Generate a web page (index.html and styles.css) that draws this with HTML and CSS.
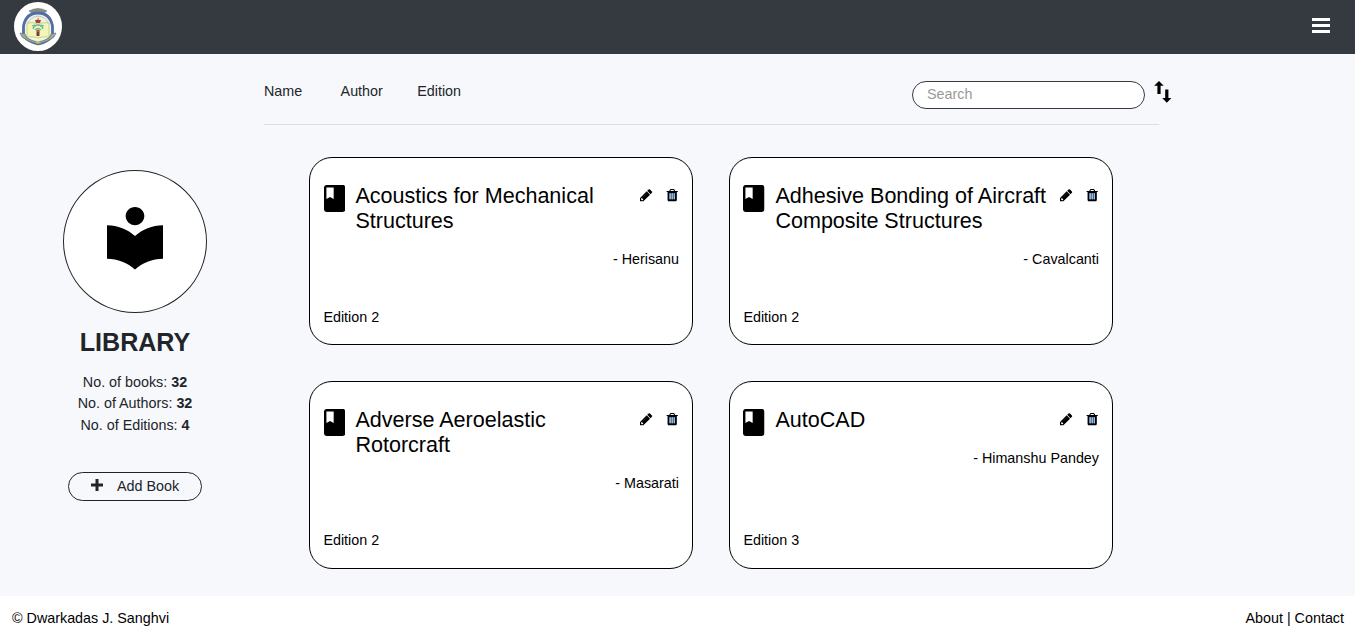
FILE: index.html
```html
<!DOCTYPE html>
<html lang="en">
<head>
<meta charset="utf-8">
<title>Library</title>
<link rel="stylesheet" href="styles.css">
</head>
<body>
<svg class="sprite" aria-hidden="true">
  <symbol id="book" viewBox="4 2 16 20" preserveAspectRatio="none"><path d="M18 2H6c-1.100 0-2 .9-2 2v16c0 1.100.9 2 2 2h12c1.100 0 2-.9 2-2V4c0-1.100-.9-2-2-2zM5.800 3.900h5.400v8.400l-2.700-1.500-2.700 1.500V3.900z"/></symbol>
  <symbol id="pencil" viewBox="0 0 1792 1792"><path d="M450 1536l91-91-194-194-91 91v107h87v87h107zM960 416l416 416-832 832h-416v-416zm683 96q0 53-37 90l-166 166-416-416 166-165q36-38 90-38 53 0 91 38l235 234q37 39 37 91z"/><path d="M990 640l-540 540" stroke="#555" stroke-width="45"/></symbol>
  <symbol id="trash" viewBox="0 0 1792 1792"><path d="M704 1376v-704q0-14-9-23t-23-9h-64q-14 0-23 9t-9 23v704q0 14 9 23t23 9h64q14 0 23-9t9-23zm256 0v-704q0-14-9-23t-23-9h-64q-14 0-23 9t-9 23v704q0 14 9 23t23 9h64q14 0 23-9t9-23zm256 0v-704q0-14-9-23t-23-9h-64q-14 0-23 9t-9 23v704q0 14 9 23t23 9h64q14 0 23-9t9-23zm-544-992h448l-48-117q-7-9-17-11h-317q-10 2-17 11zm928 32v64q0 14-9 23t-23 9h-96v948q0 83-47 143.500t-113 60.500h-832q-66 0-113-58.500t-47-141.500v-952h-96q-14 0-23-9t-9-23v-64q0-14 9-23t23-9h309l70-167q15-37 54-63t79-26h320q40 0 79 26t54 63l70 167h309q14 0 23 9t9 23z"/><path d="M640 640v760M896 640v760M1152 640v760" stroke="#7cb8ff" stroke-width="145"/></symbol>
</svg>

<header class="navbar">
  <a class="brand" aria-label="Home">
    <svg viewBox="0 0 48 48">
      <path d="M15 9q9-5 18 0l-3 2q-6-3-12 0z" fill="#7f8f83" stroke="#65766c" stroke-width=".6"/>
      <path d="M9.500 34V24Q12 11 24 11t14.500 13v10q-5 6-14.500 8-9-2-14.500-8z" fill="#f1f3e4" stroke="#526da8" stroke-width="2.800"/>
      <path d="M14 33V21q2-6 10-7 8 1 10 7v12" fill="#eef2df" stroke="#a5b4cf" stroke-width=".7"/>
      <path d="M13 21q6-1 11 1 5-2 11-1v14q-6-1-11 1-5-2-11-1z" fill="#f4f5b9" stroke="#bdcc72" stroke-width=".8"/>
      <path d="M19 27q1-4 5-4t5 4M21 28q3-3 6 0M18 24l3-1M27 23l3 1" fill="none" stroke="#68b99a" stroke-width="1.300"/>
      <path d="M21 18h6l-1 3h-4z" fill="#a93e38"/><path d="M24 15l1.500 3h-3z" fill="#e7a34a"/>
      <path d="M22.500 28h3v6h-3z" fill="#793c34"/><path d="M24 27v3" stroke="#e28b47"/>
      <path d="M6 31l5 1 2 4q5 3 11 4 6-1 11-4l2-4 5-1-2 4q-6 5-16 7-10-2-16-7z" fill="#9ba7a4" stroke="#65756f" stroke-width=".7"/>
      <path d="M21 40l3-1 3 1-3 2z" fill="#b7cf5a"/>
    </svg>
  </a>
  <svg class="menu" viewBox="0 0 18 15"><path d="M0 0h18v3H0zM0 6h18v3H0zM0 12h18v3H0z"/></svg>
</header>

<main class="page">
  <aside class="profile">
    <div class="avatar"><svg viewBox="3 2 18 20.550" preserveAspectRatio="none"><path d="M12 11.550C9.640 9.350 6.480 8 3 8v11c3.480 0 6.640 1.350 9 3.550 2.360-2.190 5.520-3.550 9-3.550V8c-3.480 0-6.640 1.350-9 3.550zM12 8c1.660 0 3-1.340 3-3s-1.340-3-3-3-3 1.340-3 3 1.340 3 3 3z"/></svg></div>
    <h1 class="heading">LIBRARY</h1>
    <p class="stats">No. of books: <b>32</b><br>No. of Authors: <b>32</b><br>No. of Editions: <b>4</b></p>
    <button class="add"><svg viewBox="0 0 12 12"><path d="M4.500 0h3v4.500H12v3H7.500V12h-3V7.500H0v-3h4.500z"/></svg><span>Add Book</span></button>
  </aside>

  <section class="content">
    <div class="toolbar">
      <nav class="filters"><a>Name</a><a>Author</a><a>Edition</a></nav>
      <input class="search" type="text" placeholder="Search">
      <svg class="sort" viewBox="0 0 17 22"><path d="M5 0l4.700 4.800H6.600V13H3.400V4.800H.2zM11.200 8.500h3.200V17h3l-4.600 4.700L8.200 17h3z"/></svg>
    </div>
    <div class="cards">
      <article class="card">
        <div class="card-top"><svg class="book"><use href="#book"/></svg><h2 class="title">Acoustics for Mechanical Structures</h2><div class="actions"><svg><use href="#pencil"/></svg><svg><use href="#trash"/></svg></div></div>
        <p class="author">- Herisanu</p><p class="edition">Edition 2</p>
      </article>
      <article class="card">
        <div class="card-top"><svg class="book"><use href="#book"/></svg><h2 class="title">Adhesive Bonding of Aircraft Composite Structures</h2><div class="actions"><svg><use href="#pencil"/></svg><svg><use href="#trash"/></svg></div></div>
        <p class="author">- Cavalcanti</p><p class="edition">Edition 2</p>
      </article>
      <article class="card">
        <div class="card-top"><svg class="book"><use href="#book"/></svg><h2 class="title">Adverse Aeroelastic Rotorcraft</h2><div class="actions"><svg><use href="#pencil"/></svg><svg><use href="#trash"/></svg></div></div>
        <p class="author">- Masarati</p><p class="edition">Edition 2</p>
      </article>
      <article class="card">
        <div class="card-top"><svg class="book"><use href="#book"/></svg><h2 class="title">AutoCAD</h2><div class="actions"><svg><use href="#pencil"/></svg><svg><use href="#trash"/></svg></div></div>
        <p class="author">- Himanshu Pandey</p><p class="edition">Edition 3</p>
      </article>
    </div>
  </section>
</main>

<footer class="footer"><span>© Dwarkadas J. Sanghvi</span><span>About | Contact</span></footer>
</body>
</html>
```

FILE: styles.css
```css
* { box-sizing: border-box; }
body {
  margin: 0;
  height: 641px;
  overflow: hidden;
  display: flex;
  flex-direction: column;
  font: 14.33px/21.6px "Liberation Sans", Arial, sans-serif;
  color: #212529;
  background: #fff;
}
h1, h2, p { margin: 0; }
svg { display: block; flex: none; }
.sprite { display: none; }

.navbar {
  height: 54px;
  flex: none;
  display: flex;
  justify-content: space-between;
  align-items: flex-start;
  padding: 2px 25px 0 14px;
  background: #343a40;
}
.brand {
  width: 48px;
  height: 49px;
  border-radius: 50%;
  background: #fff;
}
.brand svg { width: 48px; height: 48px; }
.menu { width: 18px; height: 15px; margin-top: 16px; fill: #fff; }

.page {
  height: 542px;
  flex: none;
  display: flex;
  background: #f7f8fc;
}
.profile {
  width: 270px;
  padding-top: 116px;
  display: flex;
  flex-direction: column;
  align-items: center;
}
.avatar {
  width: 144px;
  height: 143px;
  padding-top: 36px;
  display: flex;
  justify-content: center;
  align-items: flex-start;
  border: 1px solid #212529;
  border-radius: 50%;
  background: #fff;
}
.avatar svg { width: 56px; height: 62.5px; }
.heading { margin-top: 14px; font-size: 25.1px; line-height: 30px; }
.stats { margin-top: 14.5px; text-align: center; }
.add {
  width: 134px;
  height: 29px;
  margin-top: 35.5px;
  padding: 1px 0 0 22px;
  display: flex;
  align-items: center;
  gap: 14px;
  font: inherit;
  color: inherit;
  background: transparent;
  border: 1px solid #212529;
  border-radius: 15px;
}
.add svg { width: 12px; height: 12px; margin-top: -3px; fill: #212529; }

.content { width: 902px; margin-left: -6px; }
.toolbar {
  width: 895px;
  height: 71px;
  padding-top: 27px;
  display: flex;
  align-items: flex-start;
  border-bottom: 1px solid #dddee2;
}
.filters { width: 648px; flex: none; display: flex; }
.filters a { width: 76.6px; }
.search {
  width: 233px;
  height: 28px;
  flex: none;
  padding: 0 14px 2px;
  font: inherit;
  background: #fff;
  border: 1px solid #343a40;
  border-radius: 15px;
}
.search::placeholder { color: #999; }
.sort { width: 17px; height: 22px; margin-left: 8.5px; overflow: visible; }

.cards {
  margin: 32px 0 0 45px;
  display: grid;
  grid-template-columns: 384px 384px;
  grid-auto-rows: 188px;
  gap: 36px;
  color: #000;
}
.card {
  display: flex;
  flex-direction: column;
  padding: 25px 13px 15.5px 13.4px;
  background: #fff;
  border: 1px solid #000;
  border-radius: 23px;
}
.card:nth-child(n + 3) { padding-bottom: 16px; }
.card-top { display: flex; }
.book { width: 21.5px; height: 27px; margin: 2px 10.5px -4px 0; }
.card:nth-child(odd) .book { margin-left: .6px; margin-right: 9.9px; }
.title { width: 280px; font-size: 21.55px; line-height: 25px; font-weight: 400; }
.actions { display: flex; gap: 11.6px; margin: 4.5px 0 0 6px; }
.actions svg { width: 14.4px; height: 14.4px; }
.author { margin-top: 16px; text-align: right; }
.edition { margin-top: auto; }

.footer {
  height: 45px;
  display: flex;
  justify-content: space-between;
  align-items: center;
  padding: 0 11px 0 12px;
  color: #000;
}
```
